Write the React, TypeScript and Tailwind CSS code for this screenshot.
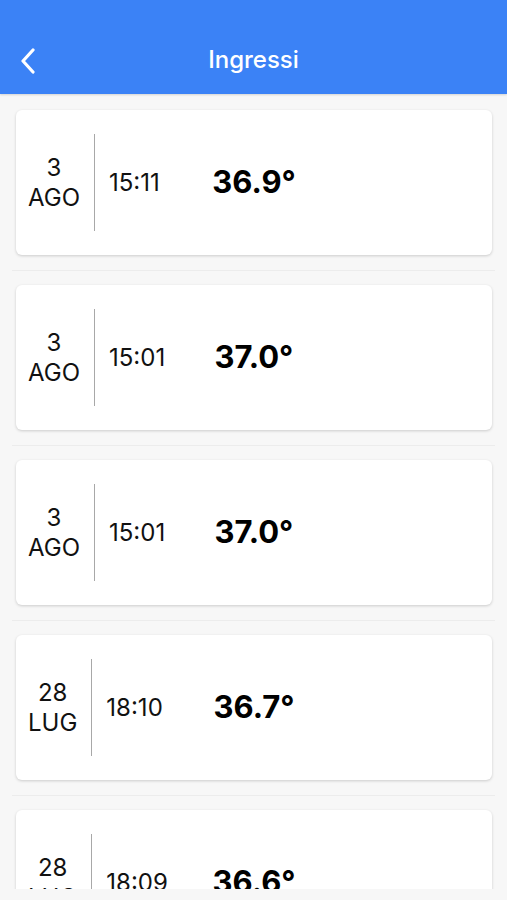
import React from 'react';

interface Entry {
  day: string;
  month: string;
  time: string;
  temp: string;
}

const entries: Entry[] = [
  { day: '3', month: 'AGO', time: '15:11', temp: '36.9°' },
  { day: '3', month: 'AGO', time: '15:01', temp: '37.0°' },
  { day: '3', month: 'AGO', time: '15:01', temp: '37.0°' },
  { day: '28', month: 'LUG', time: '18:10', temp: '36.7°' },
  { day: '28', month: 'LUG', time: '18:09', temp: '36.6°' }
];

function EntryCard({ entry }: { entry: Entry }) {
  return (
    <div>
      <div className="ml-4 w-[476px] h-[145px] rounded-md bg-white shadow-[0_1px_3px_rgba(0,0,0,0.18)] flex items-center">
        <div className="w-[180px] flex items-center">
          <div className="pl-3 pr-[14px] text-center text-[24px] leading-[30px] text-[#111]">
            <div>{entry.day}</div>
            <div>{entry.month}</div>
          </div>
          <div className="w-px h-[97px] bg-[#a8a8a8]" />
          <div className="pl-[14px] text-[24px] text-[#111]">{entry.time}</div>
        </div>
        <div className="w-[116px] text-center text-[31px] font-bold text-black">{entry.temp}</div>
      </div>
      <div className="mt-[15px] mb-[14px] mx-3 h-px bg-[#ececec]" />
    </div>
  );
}

export default function App() {
  return (
    <div className="w-[507px] h-[900px] bg-[#f7f7f7] overflow-hidden" style={{ fontFamily: 'Inter, "Liberation Sans", sans-serif' }}>
      <header className="h-[94px] bg-[#3b82f6] pt-[38px] shadow-[0_1px_2px_rgba(0,0,0,0.15)] relative z-10">
        <div className="relative h-[44px] flex items-center justify-center">
          <svg className="absolute left-[19px] top-[10px]" width="18" height="26" viewBox="0 0 18 26" fill="none">
            <path d="M14 2 L4 13 L14 24" stroke="white" strokeWidth="3.2" strokeLinecap="round" strokeLinejoin="round" />
          </svg>
          <span className="text-white text-[24px] font-medium">Ingressi</span>
        </div>
      </header>
      <main className="h-[795px] overflow-hidden pt-4">
        {entries.map((e, i) => (
          <EntryCard key={i} entry={e} />
        ))}
      </main>
    </div>
  );
}
